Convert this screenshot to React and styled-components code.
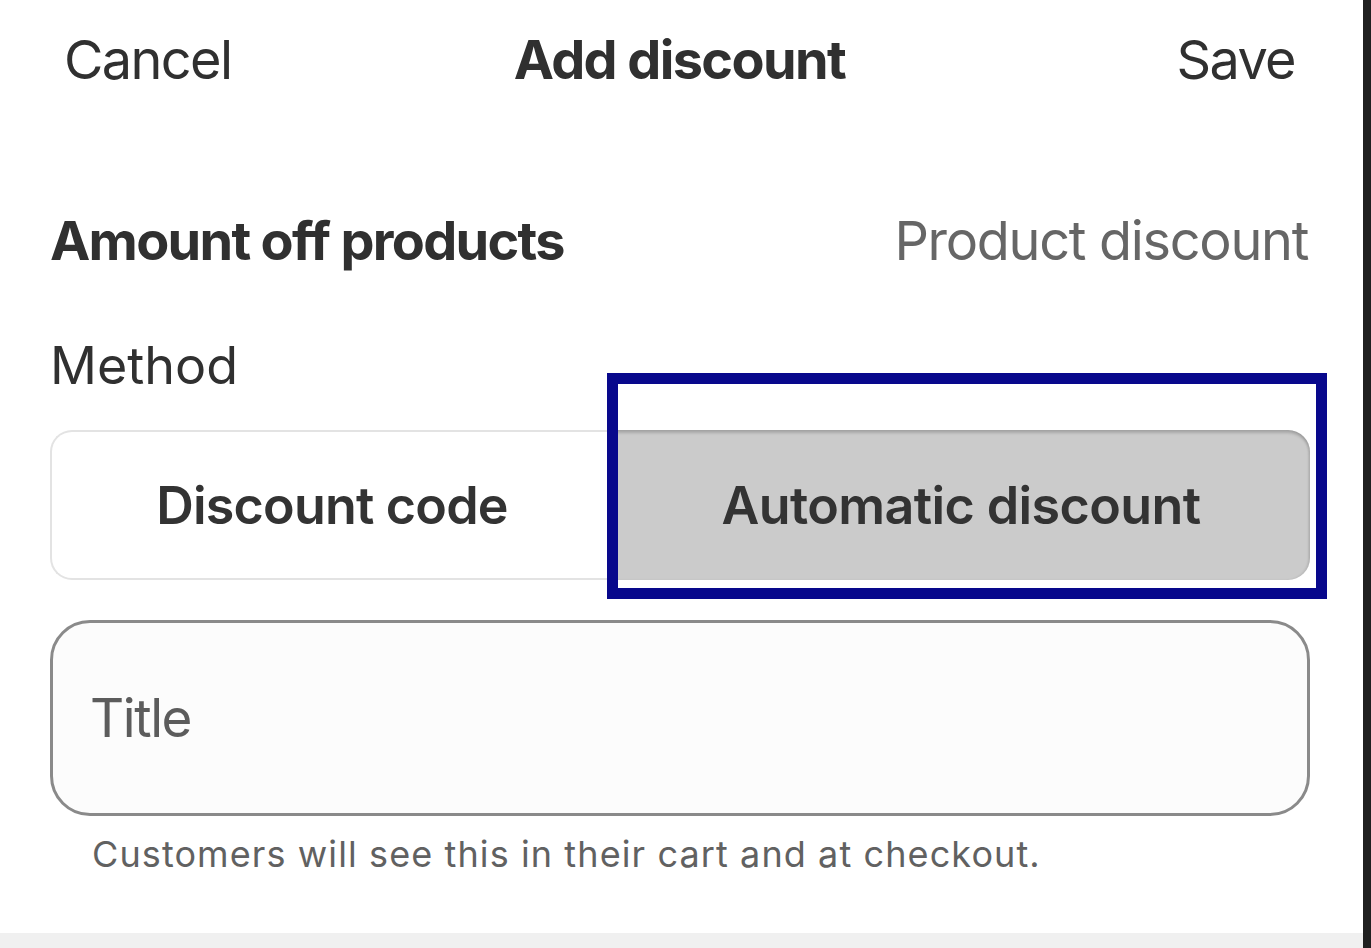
import React from 'react'
import styled, { createGlobalStyle } from 'styled-components'

const GlobalStyle = createGlobalStyle`
  html, body {
    margin: 0;
    padding: 0;
    background: #fff;
  }
  body {
    font-family: Inter, "Liberation Sans", Arial, sans-serif;
    color: #303030;
  }
`

const Screen = styled.div`
  display: flex;
  width: 1371px;
  height: 948px;
  overflow: hidden;
`

const Main = styled.div`
  flex: 1;
  display: flex;
  flex-direction: column;
  background: #fff;
`

const EdgeBar = styled.div`
  width: 8px;
  background: #202020;
`

const Content = styled.div`
  flex: 1;
`

const BottomStrip = styled.div`
  height: 15px;
  background: #f0f0f0;
`

const Header = styled.header`
  height: 120px;
  display: grid;
  grid-template-columns: 1fr auto 1fr;
  align-items: center;
  padding: 0 68px 0 64px;
  font-size: 54px;
  line-height: 1;
  letter-spacing: -1.6px;
`

const HeaderAction = styled.span`
  justify-self: ${p => (p.$end ? 'end' : 'start')};
  color: #303030;
`

const HeaderTitle = styled.h1`
  margin: 0;
  font-size: 54px;
  font-weight: 700;
  color: #303030;
`

const Body = styled.div`
  padding: 0 53px 0 50px;
`

const SummaryRow = styled.div`
  margin-top: 94px;
  display: flex;
  justify-content: space-between;
  align-items: center;
  font-size: 54px;
  line-height: 1;
`

const SummaryTitle = styled.span`
  font-weight: 700;
  letter-spacing: -1.7px;
  color: #303030;
`

const SummaryType = styled.span`
  letter-spacing: -1.3px;
  margin-right: 2px;
  color: #666;
`

const FieldLabel = styled.div`
  margin-top: 72px;
  font-size: 52px;
  line-height: 1;
  color: #303030;
`

const Segmented = styled.div`
  position: relative;
  margin-top: 38px;
  height: 150px;
  display: grid;
  grid-template-columns: 562px 1fr;
`

const Segment = styled.button`
  font: inherit;
  font-size: 52px;
  font-weight: 600;
  letter-spacing: ${p => (p.$active ? '-0.6px' : '-0.8px')};
  color: #333;
  display: flex;
  align-items: center;
  justify-content: center;
  padding: 0;
  cursor: pointer;
  background: ${p => (p.$active ? '#cbcbcb' : '#fff')};
  border: ${p => (p.$active ? 'none' : '2px solid #e3e3e3')};
  border-right: none;
  border-radius: ${p => (p.$active ? '0 22px 22px 0' : '22px 0 0 22px')};
  box-shadow: ${p =>
    p.$active ? 'inset 0 3px 3px rgba(0,0,0,0.18), inset -2px 0 2px rgba(0,0,0,0.08)' : 'none'};
`

const Highlight = styled.div`
  position: absolute;
  left: 557px;
  top: -57px;
  width: 720px;
  height: 226px;
  box-sizing: border-box;
  border: 11px solid #08088c;
  pointer-events: none;
`

const TitleInput = styled.div`
  margin-top: 40px;
  height: 196px;
  box-sizing: border-box;
  border: 3px solid #8a8a8a;
  border-radius: 40px;
  background: #fcfcfc;
  display: flex;
  align-items: center;
  padding-left: 37px;
  font-size: 53px;
  line-height: 1;
  letter-spacing: -1.4px;
  color: #5c5c5c;
`

const HelpText = styled.p`
  margin: 20px 0 0;
  padding-left: 42px;
  font-size: 36px;
  line-height: 1;
  letter-spacing: 1.1px;
  color: #616161;
`

export default function App() {
  return (
    <>
      <GlobalStyle />
      <Screen>
        <Main>
          <Content>
            <Header>
              <HeaderAction>Cancel</HeaderAction>
              <HeaderTitle>Add discount</HeaderTitle>
              <HeaderAction $end>Save</HeaderAction>
            </Header>
            <Body>
              <SummaryRow>
                <SummaryTitle>Amount off products</SummaryTitle>
                <SummaryType>Product discount</SummaryType>
              </SummaryRow>
              <FieldLabel>Method</FieldLabel>
              <Segmented>
                <Segment>Discount code</Segment>
                <Segment $active>Automatic discount</Segment>
                <Highlight />
              </Segmented>
              <TitleInput>Title</TitleInput>
              <HelpText>Customers will see this in their cart and at checkout.</HelpText>
            </Body>
          </Content>
          <BottomStrip />
        </Main>
        <EdgeBar />
      </Screen>
    </>
  )
}
